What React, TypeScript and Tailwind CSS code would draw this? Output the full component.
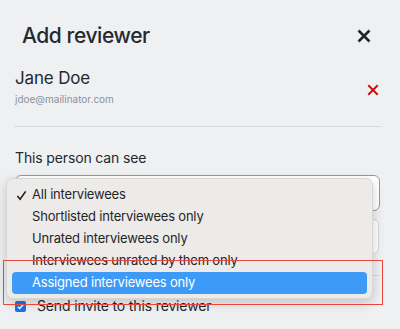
import React from "react";

const options = [
  "All interviewees",
  "Shortlisted interviewees only",
  "Unrated interviewees only",
  "Interviewees unrated by them only",
  "Assigned interviewees only",
];

function CrossIcon({ className, stroke = 2.6 }: { className?: string; stroke?: number }) {
  return (
    <svg viewBox="0 0 14 14" className={className} fill="none">
      <path d="M1.5 1.5L12.5 12.5M12.5 1.5L1.5 12.5" stroke="currentColor" strokeWidth={stroke} strokeLinecap="butt" />
    </svg>
  );
}

export default function App() {
  const selected = 0;
  const highlighted = 4;

  return (
    <div className="relative h-[329px] w-[400px] overflow-hidden bg-[#eff0f2] font-['Inter',sans-serif] text-[#24292f]">
      {/* header */}
      <div className="flex items-center justify-between pl-[22px] pr-[29px] pt-[22px]">
        <h1 className="text-[21px] leading-[28px] font-medium tracking-[-0.02em]">Add reviewer</h1>
        <CrossIcon className="h-[14px] w-[14px] text-[#22272b]" stroke={2.6} />
      </div>

      {/* reviewer */}
      <div className="mt-[16px] flex items-center justify-between pl-[15px] pr-[21px]">
        <div>
          <div className="text-[17px] leading-[24px] tracking-[-0.01em]">Jane Doe</div>
          <div className="mt-[1px] text-[10px] leading-[16px] text-[#8b929a]">jdoe@mailinator.com</div>
        </div>
        <CrossIcon className="mt-[6px] h-[12px] w-[12px] text-[#d10a0a]" stroke={2.2} />
      </div>

      <div className="mx-[14px] mt-[19px] h-px w-[367px] bg-[#d6d9dd]" />

      {/* permissions */}
      <div className="px-[15px] pt-[21px]">
        <div className="text-[14px] leading-[20px] tracking-[-0.01em]">This person can see</div>
        <div className="mt-[7px] h-[36px] w-[365px] rounded-[6px] border border-[#8d99a6] bg-white" />
        <div className="mt-[8px] h-[35px] w-[364px] rounded-[6px] border border-[#d3d7dc] bg-white" />
        <div className="mt-[21px] h-px w-[365px] bg-[#d6d9dd]" />
        <div className="mt-[20px] flex items-center gap-[11px]">
          <div className="flex h-[11px] w-[11px] items-center justify-center rounded-[2px] bg-[#1a73e8]">
            <svg viewBox="0 0 10 10" className="h-[9px] w-[9px]" fill="none">
              <path d="M2 5.2L4.2 7.3L8 2.8" stroke="white" strokeWidth="1.6" />
            </svg>
          </div>
          <span className="text-[14px] leading-[20px] tracking-[-0.01em]">Send invite to this reviewer</span>
        </div>
      </div>

      {/* native select popup */}
      <div className="absolute left-[6px] top-[178px] w-[367px] rounded-[7px] border border-[#d9d7d5] bg-[#ecebe9] px-[5px] pb-[4px] pt-[5px] shadow-[0_4px_12px_rgba(0,0,0,0.18)]">
        {options.map((o, i) => (
          <div
            key={o}
            className={
              i === highlighted
                ? "relative flex h-[22px] items-center rounded-[4px] bg-[#3d9bf7] pl-[20px] text-[13px] tracking-[-0.015em] text-white"
                : "relative flex h-[22px] items-center pl-[20px] text-[13px] tracking-[-0.015em] text-[#262626]"
            }
          >
            {i === selected && (
              <svg viewBox="0 0 12 12" className="absolute left-[4px] top-[6px] h-[11px] w-[11px]" fill="none">
                <path d="M1.5 6.5L4.5 10L10.5 1.5" stroke="#1f1f1f" strokeWidth="1.8" />
              </svg>
            )}
            {o}
          </div>
        ))}
      </div>

      {/* annotation */}
      <div className="pointer-events-none absolute left-[3px] top-[260px] h-[45px] w-[380px] border-[1.5px] border-[#e8473c]" />
    </div>
  );
}
